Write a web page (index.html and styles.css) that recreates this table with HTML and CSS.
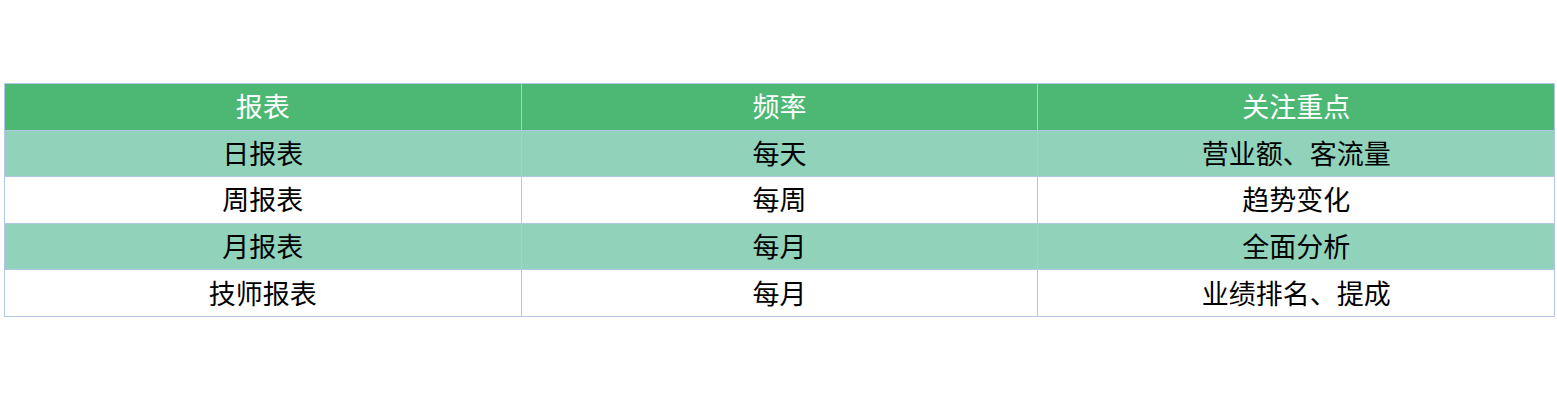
FILE: index.html
```html
<!DOCTYPE html>
<html lang="zh">
<head>
<meta charset="utf-8">
<link rel="stylesheet" href="styles.css">
</head>
<body>
<div class="page">
<table class="report">
<colgroup><col class="c"><col class="c"><col class="c"></colgroup>
<thead>
<tr><th>报表</th><th>频率</th><th>关注重点</th></tr>
</thead>
<tbody>
<tr class="odd"><td>日报表</td><td>每天</td><td>营业额、客流量</td></tr>
<tr><td>周报表</td><td>每周</td><td>趋势变化</td></tr>
<tr class="odd"><td>月报表</td><td>每月</td><td>全面分析</td></tr>
<tr><td>技师报表</td><td>每月</td><td>业绩排名、提成</td></tr>
</tbody>
</table>
</div>
</body>
</html>
```
FILE: styles.css
```css
html, body {
  margin: 0;
  padding: 0;
  background: #ffffff;
}
.page {
  padding: 83px 0 0 4px;
}
.report {
  width: 1551px;
  border-collapse: collapse;
  table-layout: fixed;
  font-family: "Noto Sans CJK SC", "Noto Sans", sans-serif;
  font-size: 27px;
}
.report th, .report td {
  border: 1px solid #b4c6e7;
  height: 43.6px;
  padding: 0 0 2px 0;
  text-align: center;
  vertical-align: middle;
  line-height: 1;
  font-weight: normal;
}
.report th {
  background: #4cb874;
  color: #ffffff;
}
.report td {
  color: #000000;
  background: #ffffff;
}
.report tr.odd td {
  background: #91d2bb;
}
```
